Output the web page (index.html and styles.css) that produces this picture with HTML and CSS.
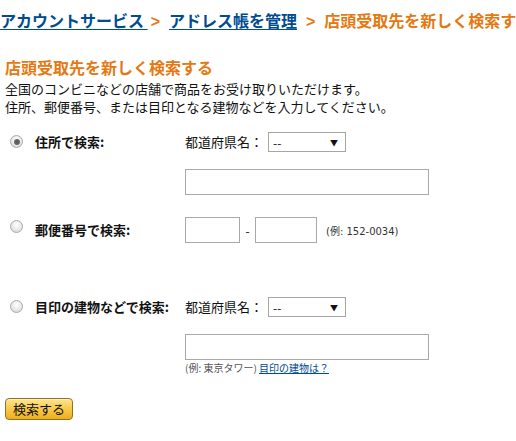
FILE: index.html
```html
<!DOCTYPE html>
<html lang="ja">
<head>
<meta charset="utf-8">
<link rel="stylesheet" href="styles.css">
</head>
<body>
<nav class="crumbs">
  <a class="crumb-link" href="#">アカウントサービス </a><span class="sep sep-first">&gt;</span><a class="crumb-link" href="#">アドレス帳を管理</a><span class="sep">&gt;</span><span class="crumb-current">店頭受取先を新しく検索する</span>
</nav>
<main class="content">
  <h1 class="title">店頭受取先を新しく検索する</h1>
  <p class="desc">全国のコンビニなどの店舗で商品をお受け取りいただけます。<br>住所、郵便番号、または目印となる建物などを入力してください。</p>

  <form class="form">
    <div class="row row-addr">
      <input class="radio" type="radio" name="mode" checked>
      <span class="label">住所で検索:</span>
      <div class="fields">
        <div class="line">
          <span class="pref">都道府県名：</span>
          <span class="select"><span class="sel-text">--</span><span class="arrow">▼</span></span>
        </div>
        <input class="text wide" type="text">
      </div>
    </div>

    <div class="row row-zip">
      <input class="radio" type="radio" name="mode">
      <span class="label">郵便番号で検索:</span>
      <div class="fields">
        <div class="line">
          <input class="text zip1" type="text">
          <span class="dash">-</span>
          <input class="text zip2" type="text">
          <span class="example">(例: 152-0034)</span>
        </div>
      </div>
    </div>

    <div class="row row-land">
      <input class="radio" type="radio" name="mode">
      <span class="label">目印の建物などで検索:</span>
      <div class="fields">
        <div class="line">
          <span class="pref">都道府県名：</span>
          <span class="select"><span class="sel-text">--</span><span class="arrow">▼</span></span>
        </div>
        <input class="text wide" type="text">
        <div class="note">(例: 東京タワー) <a class="note-link" href="#">目印の建物は？</a></div>
      </div>
    </div>

    <button class="btn" type="button">検索する</button>
  </form>
</main>
</body>
</html>
```

FILE: styles.css
```css
* { box-sizing: border-box; }
html, body { margin: 0; padding: 0; background: #fff; }
body {
  font-family: "Noto Sans CJK JP", "Noto Sans", sans-serif;
  color: #111;
  font-size: 13px;
  width: 516px;
  height: 441px;
  overflow: hidden;
}
.crumbs {
  padding-top: 10px;
  height: 30px;
  line-height: 20px;
  font-size: 16px;
  font-weight: bold;
  white-space: nowrap;
  overflow: hidden;
}
.crumb-link {
  color: #004b91;
  text-decoration: underline;
  text-underline-offset: 2px;
  text-decoration-thickness: 1px;
}
.sep {
  display: inline-block;
  color: #e47911;
  margin: 0 9px 0 9px;
  font-family: "Liberation Sans", sans-serif;
}
.sep-first { margin-left: 3px; }
.crumb-current { color: #e47911; }
.content { padding-left: 5px; }
.title {
  margin: 27px 0 0 0;
  font-size: 16px;
  line-height: 20px;
  color: #e47911;
  font-weight: bold;
}
.desc {
  margin: 3px 0 0 0;
  font-size: 13px;
  line-height: 18px;
  color: #111;
}
.form { margin-top: 16px; }
.row {
  display: grid;
  grid-template-columns: 30px 150px 1fr;
  align-items: start;
}
.radio {
  appearance: none;
  -webkit-appearance: none;
  width: 13px;
  height: 13px;
  margin: 3px 0 0 5px;
  border-radius: 50%;
  border: 1px solid #a8a8a8;
  background: radial-gradient(circle at 50% 35%, #ffffff 0%, #e6e6e6 60%, #cfcfcf 100%);
  position: relative;
}
.radio:checked::after {
  content: "";
  position: absolute;
  left: 2.5px; top: 2.5px;
  width: 6px; height: 6px;
  border-radius: 50%;
  background: radial-gradient(circle, #555 0%, #777 100%);
}
.label {
  font-weight: bold;
  font-size: 13px;
  line-height: 20px;
  color: #111;
}
.fields { display: flex; flex-direction: column; align-items: flex-start; }
.line { display: flex; align-items: center; height: 20px; }
.pref { font-size: 13px; line-height: 20px; width: 83px; }
.select {
  display: inline-flex;
  align-items: center;
  justify-content: space-between;
  width: 78px;
  height: 20px;
  border: 1px solid #a6a6a6;
  padding: 0 7px 0 4px;
  font-size: 12px;
  background: #fff;
}
.arrow { font-size: 8px; color: #111; }
.text {
  border: 1px solid #a9a9a9;
  height: 26px;
  padding: 0;
  margin: 0;
  background: #fff;
  font: inherit;
}
.wide { width: 244px; margin-top: 17px; }
.row-zip { margin-top: 22px; }
.row-zip .line { height: 26px; }
.row-zip .radio { margin-top: 3px; }
.row-zip .label { line-height: 26px; }
.zip1 { width: 55px; }
.dash { width: 15px; text-align: center; font-size: 12px; }
.zip2 { width: 62px; }
.example {
  margin-left: 9px;
  font-size: 10px;
  color: #333;
  font-family: "DejaVu Sans", "Noto Sans CJK JP", sans-serif;
}
.row-land { margin-top: 54px; }
.note {
  font-size: 10px;
  line-height: 14px;
  color: #555;
  margin-top: 1px;
}
.note-link { color: #004b91; text-decoration: underline; }
.btn {
  display: block;
  margin-top: 23px;
  width: 68px;
  height: 22px;
  padding: 0;
  border: 1px solid #8f7129;
  border-radius: 4px;
  background: linear-gradient(#fde68f 0%, #f8c94a 50%, #eeae1c 100%);
  font-family: "Noto Sans CJK JP", sans-serif;
  font-size: 13px;
  line-height: 20px;
  text-align: center;
  color: #111;
  box-shadow: inset 0 1px 0 #fff1b8;
}
```
